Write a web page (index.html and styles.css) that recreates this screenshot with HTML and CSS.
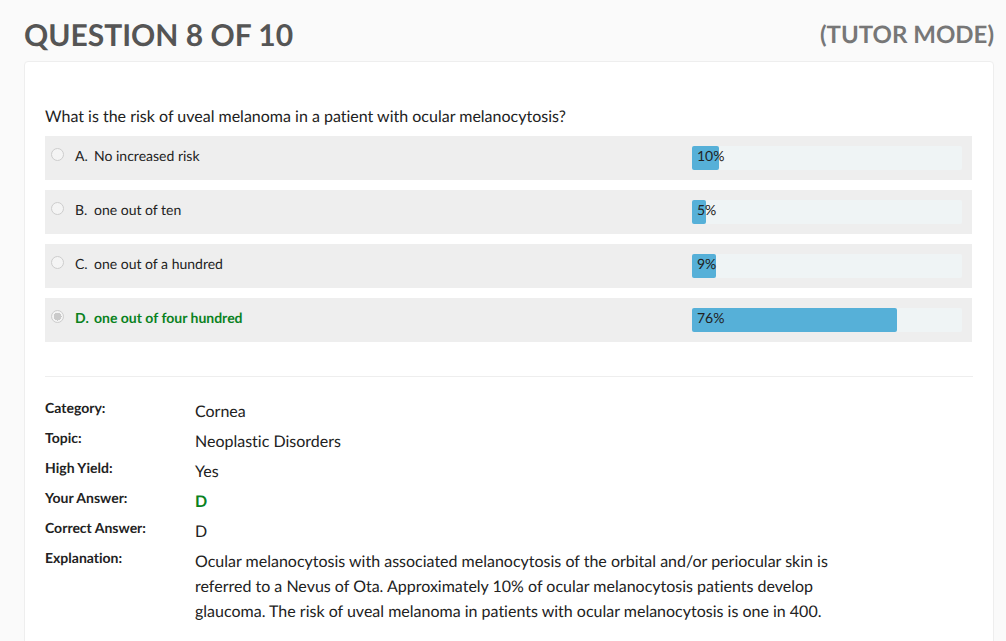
FILE: index.html
```html
<!DOCTYPE html>
<html lang="en">
<head>
<meta charset="utf-8">
<meta name="viewport" content="width=device-width, initial-scale=1">
<title>Question 8 of 10</title>
<link rel="stylesheet" href="styles.css">
</head>
<body>
<header class="page-header">
  <h1 class="title">QUESTION 8 OF 10</h1>
  <span class="mode">(TUTOR MODE)</span>
</header>
<main class="card">
  <fieldset class="question">
    <legend class="prompt">What is the risk of uveal melanoma in a patient with ocular melanocytosis?</legend>
    <div class="choice">
      <input class="radio" type="radio" name="answer" id="a" disabled>
      <label class="choice-label" for="a"><span class="letter">A.</span>No increased risk</label>
      <div class="bar"><div class="fill" style="width:10%"></div><span class="percent">10%</span></div>
    </div>
    <div class="choice">
      <input class="radio" type="radio" name="answer" id="b" disabled>
      <label class="choice-label" for="b"><span class="letter">B.</span>one out of ten</label>
      <div class="bar"><div class="fill" style="width:5%"></div><span class="percent">5%</span></div>
    </div>
    <div class="choice">
      <input class="radio" type="radio" name="answer" id="c" disabled>
      <label class="choice-label" for="c"><span class="letter">C.</span>one out of a hundred</label>
      <div class="bar"><div class="fill" style="width:9%"></div><span class="percent">9%</span></div>
    </div>
    <div class="choice correct">
      <input class="radio" type="radio" name="answer" id="d" disabled checked>
      <label class="choice-label" for="d"><span class="letter">D.</span>one out of four hundred</label>
      <div class="bar"><div class="fill" style="width:76%"></div><span class="percent">76%</span></div>
    </div>
  </fieldset>
  <hr class="divider">
  <dl class="details">
    <dt>Category:</dt><dd>Cornea</dd>
    <dt>Topic:</dt><dd>Neoplastic Disorders</dd>
    <dt>High Yield:</dt><dd>Yes</dd>
    <dt>Your Answer:</dt><dd class="right">D</dd>
    <dt>Correct Answer:</dt><dd>D</dd>
    <dt>Explanation:</dt><dd>Ocular melanocytosis with associated melanocytosis of the orbital and/or periocular skin is referred to a Nevus of Ota. Approximately 10% of ocular melanocytosis patients develop glaucoma. The risk of uveal melanoma in patients with ocular melanocytosis is one in 400.</dd>
  </dl>
</main>
</body>
</html>
```
FILE: styles.css
```css
* { box-sizing: border-box; }
body {
  margin: 0;
  padding: 16px 12px 0 24px;
  background: #fafafa;
  color: #222;
  font-family: Lato, "Liberation Sans", sans-serif;
  font-size: 16px;
  line-height: 25px;
  font-variant-ligatures: none;
  text-rendering: geometricPrecision;
}
.page-header {
  display: flex;
  justify-content: space-between;
  align-items: center;
  margin-bottom: 7px;
  font-weight: 700;
}
.title { margin: 0; font-size: 30px; line-height: 38px; color: #555; }
.mode { font-size: 24px; line-height: 38px; color: #777; }
.card {
  padding: 42px 20px 24px;
  background: #fff;
  border: 1px solid #eee;
  border-radius: 4px;
}
.question { min-width: 0; margin: 0; padding: 0 1px 0 0; border: 0; }
.prompt { padding: 0; margin-bottom: 7px; }
.choice {
  display: flex;
  align-items: flex-start;
  margin-bottom: 10px;
  padding: 10px;
  background: #eee;
  font-size: 14px;
  line-height: 20px;
}
.radio {
  flex: none;
  appearance: none;
  width: 13px;
  height: 13px;
  margin: 2px 11px 0 -4px;
  border: 1px solid #cdcdcd;
  border-radius: 50%;
  background: #f4f4f4;
}
.radio:checked { background: radial-gradient(circle, #cacaca 0 3px, #cacaca 4px, #f4f4f4 4px); }
.choice-label { flex: 1; }
.letter { display: inline-block; min-width: 19px; }
.correct .choice-label { color: #0a821e; font-weight: 700; }
.bar {
  position: relative;
  flex: none;
  width: 270px;
  height: 24px;
  border-radius: 2px;
  background: #eff4f5;
}
.fill { height: 100%; background: #56b0d8; border-radius: 2px; }
.percent { position: absolute; top: 0; left: 5px; }
.divider { height: 1px; margin: 24px 0 19px; border: 0; background: #eee; }
.details {
  display: grid;
  grid-template-columns: 150px minmax(0, 640px);
  row-gap: 5px;
  margin: 0;
}
.details dt { font-size: 14px; line-height: 24px; font-weight: 700; }
.details dd { margin: 0; padding-top: 3px; margin-bottom: -3px; }
.details .right { color: #0a821e; font-weight: 700; }
```
